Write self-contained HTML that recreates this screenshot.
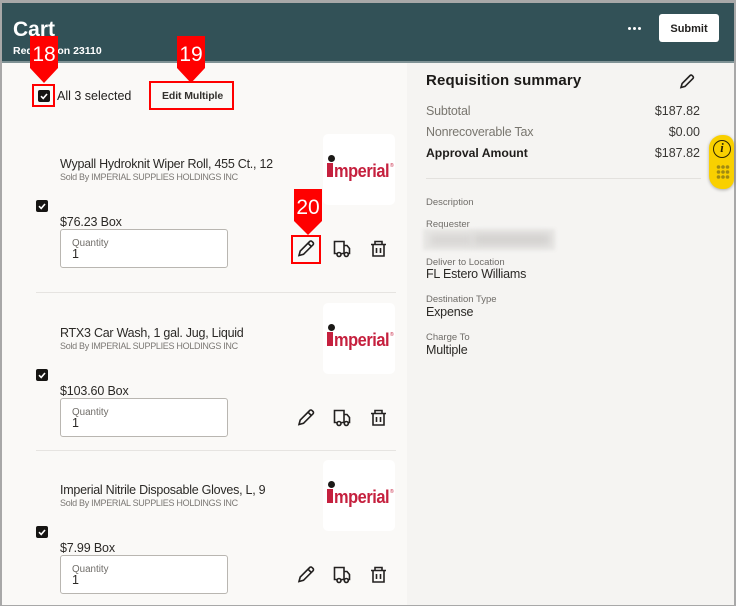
<!DOCTYPE html>
<html><head><meta charset="utf-8">
<style>
html,body{margin:0;padding:0;background:#fff}
body{width:739px;height:609px;overflow:hidden;position:relative;font-family:"Liberation Sans",sans-serif;color:#1f1d1b}
.a{position:absolute;white-space:nowrap;line-height:1}
#wrap{position:absolute;left:0;top:0;width:739px;height:609px;filter:blur(.35px)}
.chk{position:absolute;width:12px;height:12px;background:#161513;border-radius:2px}
.chk svg{position:absolute;left:0;top:0}
.qty{position:absolute;left:60px;width:166px;height:37px;background:#fff;border:1px solid #b9b6b1;border-radius:3px}
.logo{position:absolute;left:323px;width:72px;height:71px;background:#fff;border-radius:5px}
.red{position:absolute;border:2px solid #f00;box-sizing:border-box}
.name{font-size:12.5px;color:#2b2926;letter-spacing:-.25px}
.sold{font-size:9px;color:#7b7874;letter-spacing:-.3px}
.price{font-size:12.5px;color:#2b2926;letter-spacing:-.15px}
.lbl{font-size:9.5px;color:#6f6c68}
.val{font-size:12.5px;color:#2b2926;letter-spacing:-.2px}
.q{font-size:9.8px;color:#6f6c68}
.imp{font-size:18px;font-weight:bold;color:#c5203e;letter-spacing:-.5px;transform:scaleX(.91);transform-origin:0 0}
.stem{width:6px;height:14px;background:#c5203e}
.dot{width:5px;height:5px;border:1px solid #1c1a18;background:#1c1a18;border-radius:50%}
.sum{font-size:12.5px;color:#79766f;letter-spacing:-.2px}
.amt{font-size:12.5px;color:#3a3835}
</style></head>
<body>
<div id="wrap">
<!-- frame -->
<div class="a" style="left:0;top:0;width:736px;height:606px;background:#a8a8a8"></div>
<div class="a" style="left:2px;top:3px;width:732px;height:602px;background:#faf9f7"></div>
<div class="a" style="left:407px;top:62px;width:327px;height:543px;background:#f5f4f2"></div>
<div class="a" style="left:2px;top:3px;width:732px;height:59px;background:#325157"></div>
<div class="a" style="left:2px;top:61px;width:732px;height:1.5px;background:#7f9295"></div>

<div class="a" style="left:13px;top:19px;font-size:21px;font-weight:bold;color:#fff">Cart</div>
<div class="a" style="left:13px;top:46px;font-size:10.5px;font-weight:bold;color:#fff">Requisition 23110</div>
<div class="a" style="left:628px;top:26.5px;width:3px;height:3px;border-radius:50%;background:#fff;box-shadow:5px 0 0 #fff,10px 0 0 #fff"></div>
<div class="a" style="left:659px;top:14px;width:60px;height:28px;background:#fff;border-radius:3px;font-size:11px;font-weight:bold;text-align:center;line-height:30px;color:#23211f">Submit</div>

<!-- top bar -->
<div class="chk" style="left:38px;top:90px"><svg width="12" height="12"><path d="M3 6.2l2.2 2.2L9 4" fill="none" stroke="#fff" stroke-width="1.6"/></svg></div>
<div class="a" style="left:57px;top:90px;font-size:12.5px;color:#23211f">All 3 selected</div>
<div class="a" style="left:162px;top:91px;font-size:10.5px;font-weight:bold;color:#33312e;letter-spacing:-.1px">Edit Multiple</div>

<!-- item 1 -->
<div class="a name" style="left:60px;top:158px">Wypall Hydroknit Wiper Roll, 455 Ct., 12</div>
<div class="a sold" style="left:60px;top:173px">Sold By IMPERIAL SUPPLIES HOLDINGS INC</div>
<div class="chk" style="left:36px;top:200px"><svg width="12" height="12"><path d="M3 6.2l2.2 2.2L9 4" fill="none" stroke="#fff" stroke-width="1.6"/></svg></div>
<div class="a price" style="left:60px;top:216px">$76.23 Box</div>
<div class="qty" style="top:229px"></div>
<div class="a q" style="left:72px;top:239px">Quantity</div>
<div class="a val" style="left:72px;top:248px">1</div>
<div class="logo" style="top:134px"></div>
<div class="a imp" style="left:333.500px;top:162px">mperial</div>
<div class="a stem" style="left:327px;top:163px"></div>
<div class="a dot" style="left:327.500px;top:154.500px"></div>
<div class="a" style="left:390px;top:164px;font-size:5px;color:#c5203e">®</div>
<div class="a" style="left:36px;top:292px;width:360px;height:1px;background:#e6e4e1"></div>

<!-- item 2 -->
<div class="a name" style="left:60px;top:327px">RTX3 Car Wash, 1 gal. Jug, Liquid</div>
<div class="a sold" style="left:60px;top:342px">Sold By IMPERIAL SUPPLIES HOLDINGS INC</div>
<div class="chk" style="left:36px;top:369px"><svg width="12" height="12"><path d="M3 6.2l2.2 2.2L9 4" fill="none" stroke="#fff" stroke-width="1.6"/></svg></div>
<div class="a price" style="left:60px;top:385px">$103.60 Box</div>
<div class="qty" style="top:398px"></div>
<div class="a q" style="left:72px;top:408px">Quantity</div>
<div class="a val" style="left:72px;top:417px">1</div>
<div class="logo" style="top:303px"></div>
<div class="a imp" style="left:333.500px;top:331px">mperial</div>
<div class="a stem" style="left:327px;top:332px"></div>
<div class="a dot" style="left:327.500px;top:323.500px"></div>
<div class="a" style="left:390px;top:333px;font-size:5px;color:#c5203e">®</div>
<div class="a" style="left:36px;top:450px;width:360px;height:1px;background:#e6e4e1"></div>

<!-- item 3 -->
<div class="a name" style="left:60px;top:484px">Imperial Nitrile Disposable Gloves, L, 9</div>
<div class="a sold" style="left:60px;top:499px">Sold By IMPERIAL SUPPLIES HOLDINGS INC</div>
<div class="chk" style="left:36px;top:526px"><svg width="12" height="12"><path d="M3 6.2l2.2 2.2L9 4" fill="none" stroke="#fff" stroke-width="1.6"/></svg></div>
<div class="a price" style="left:60px;top:542px">$7.99 Box</div>
<div class="qty" style="top:555px"></div>
<div class="a q" style="left:72px;top:565px">Quantity</div>
<div class="a val" style="left:72px;top:574px">1</div>
<div class="logo" style="top:460px"></div>
<div class="a imp" style="left:333.500px;top:488px">mperial</div>
<div class="a stem" style="left:327px;top:489px"></div>
<div class="a dot" style="left:327.500px;top:480.500px"></div>
<div class="a" style="left:390px;top:490px;font-size:5px;color:#c5203e">®</div>

<!-- icons -->
<svg class="a" style="left:0;top:0" width="739" height="609" fill="none" stroke="#232120" stroke-width="1.6">
<path d="M299 255.500l1.200-4.500 9.500-9.500a1.600 1.600 0 0 1 2.300 0l1 1a1.600 1.600 0 0 1 0 2.300l-9.500 9.500z M308 243.200l3.300 3.300"/>
<path d="M299 424.500l1.200-4.500 9.500-9.500a1.600 1.600 0 0 1 2.300 0l1 1a1.600 1.600 0 0 1 0 2.300l-9.500 9.500z M308 412.200l3.300 3.300"/>
<path d="M299 581.500l1.200-4.500 9.500-9.500a1.600 1.600 0 0 1 2.300 0l1 1a1.600 1.600 0 0 1 0 2.300l-9.500 9.500z M308 569.200l3.300 3.300"/>
<path d="M681 87.500l1.100-4 8-8a1.400 1.400 0 0 1 2 0l.9.900a1.400 1.400 0 0 1 0 2l-8 8z"/>
<g><path d="M336.500 253.500h-2v-12h9.500v12h-2.500M344 245.500h3l2.500 3v5h-1M344 253.500h.5"/><circle cx="339" cy="254.500" r="2"/><circle cx="346.300" cy="254.500" r="2"/></g>
<g transform="translate(0,169)"><path d="M336.500 253.500h-2v-12h9.500v12h-2.500M344 245.500h3l2.500 3v5h-1M344 253.500h.5"/><circle cx="339" cy="254.500" r="2"/><circle cx="346.300" cy="254.500" r="2"/></g>
<g transform="translate(0,326)"><path d="M336.500 253.500h-2v-12h9.500v12h-2.500M344 245.500h3l2.500 3v5h-1M344 253.500h.5"/><circle cx="339" cy="254.500" r="2"/><circle cx="346.300" cy="254.500" r="2"/></g>
<g><path d="M371 244.500h15M375 244v-2.500h7v2.500M373 244.500v11.500h11v-11.500M376.500 248v5M380.500 248v5"/></g>
<g transform="translate(0,169)"><path d="M371 244.500h15M375 244v-2.500h7v2.500M373 244.500v11.500h11v-11.500M376.500 248v5M380.500 248v5"/></g>
<g transform="translate(0,326)"><path d="M371 244.500h15M375 244v-2.500h7v2.500M373 244.500v11.500h11v-11.500M376.500 248v5M380.500 248v5"/></g>
</svg>

<!-- summary -->
<div class="a" style="left:426px;top:73px;font-size:15px;font-weight:bold;color:#1c1a18;letter-spacing:.15px">Requisition summary</div>
<div class="a sum" style="left:426px;top:105px">Subtotal</div>
<div class="a amt" style="right:39px;top:105px">$187.82</div>
<div class="a sum" style="left:426px;top:126px">Nonrecoverable Tax</div>
<div class="a amt" style="right:39px;top:126px">$0.00</div>
<div class="a" style="left:426px;top:147px;font-size:12.2px;font-weight:bold;color:#1f1d1b">Approval Amount</div>
<div class="a amt" style="right:39px;top:147px">$187.82</div>
<div class="a" style="left:426px;top:178px;width:275px;height:1px;background:#e3e1de"></div>

<div class="a lbl" style="left:426px;top:198px">Description</div>
<div class="a lbl" style="left:426px;top:220px">Requester</div>
<div class="a" style="left:423px;top:229px;width:132px;height:21px;background:#e8e7e5;filter:blur(1.5px)"></div>
<div class="a" style="left:430px;top:235px;width:42px;height:10px;background:#d6d4d2;filter:blur(4px)"></div>
<div class="a" style="left:474px;top:234px;width:76px;height:11px;background:#d2d0ce;filter:blur(4px)"></div>
<div class="a lbl" style="left:426px;top:258px">Deliver to Location</div>
<div class="a val" style="left:426px;top:268px">FL Estero Williams</div>
<div class="a lbl" style="left:426px;top:295px">Destination Type</div>
<div class="a val" style="left:426px;top:306px">Expense</div>
<div class="a lbl" style="left:426px;top:333px">Charge To</div>
<div class="a val" style="left:426px;top:344px">Multiple</div>

<!-- yellow widget -->
<div class="a" style="left:709px;top:135px;width:25px;height:54px;background:#f9d000;border-radius:13px 10px 10px 13px;box-shadow:0 1px 3px rgba(0,0,0,.3)"></div>
<div class="a" style="left:713px;top:140px;width:18px;height:18px;box-sizing:border-box;border:1.5px solid #2a2405;border-radius:50%;font-family:'Liberation Serif',serif;font-style:italic;font-weight:bold;font-size:12.5px;line-height:15px;text-align:center;color:#2a2405">i</div>
<svg class="a" style="left:714px;top:164px" width="18" height="18" fill="#a08a12">
<circle cx="4.500" cy="3" r="1.800"/><circle cx="9" cy="3" r="1.800"/><circle cx="13.500" cy="3" r="1.800"/>
<circle cx="4.500" cy="8" r="1.800"/><circle cx="9" cy="8" r="1.800"/><circle cx="13.500" cy="8" r="1.800"/>
<circle cx="4.500" cy="13" r="1.800"/><circle cx="9" cy="13" r="1.800"/><circle cx="13.500" cy="13" r="1.800"/>
</svg>

<!-- annotations -->
<div class="red" style="left:32px;top:84px;width:23px;height:23px"></div>
<div class="red" style="left:149px;top:81px;width:85px;height:29px"></div>
<div class="red" style="left:291px;top:235px;width:30px;height:29px"></div>
<svg class="a" style="left:0;top:0" width="739" height="609" fill="#f00">
<path d="M30 36h28v32l-14 15-14-15z"/>
<path d="M177 36h28v32l-14 15-14-15z"/>
<path d="M294 189h28v32l-14 14-14-14z"/>
</svg>
<div class="a" style="left:30px;top:44px;width:28px;text-align:center;font-size:21px;color:#fff">18</div>
<div class="a" style="left:177px;top:44px;width:28px;text-align:center;font-size:21px;color:#fff">19</div>
<div class="a" style="left:294px;top:197px;width:28px;text-align:center;font-size:21px;color:#fff">20</div>
</div>
</body></html>
